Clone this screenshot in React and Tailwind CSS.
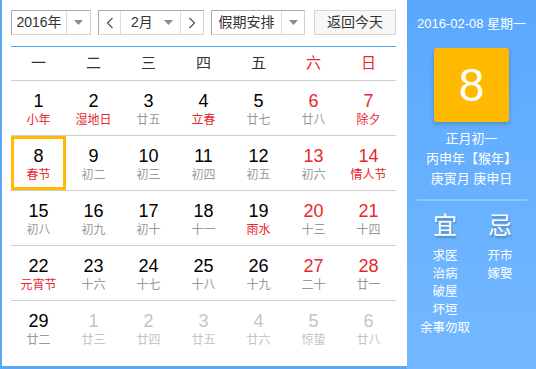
const weekdays = [
  { t: '一' }, { t: '二' }, { t: '三' }, { t: '四' }, { t: '五' }, { t: '六', red: true }, { t: '日', red: true },
];

// n: number, l: lunar, nr: red number, lr: red lunar, o: other month, s: selected
const rows = [
  [
    { n: 1, l: '小年', lr: true },
    { n: 2, l: '湿地日', lr: true },
    { n: 3, l: '廿五' },
    { n: 4, l: '立春', lr: true },
    { n: 5, l: '廿七' },
    { n: 6, l: '廿八', nr: true },
    { n: 7, l: '除夕', nr: true, lr: true },
  ],
  [
    { n: 8, l: '春节', lr: true, s: true },
    { n: 9, l: '初二' },
    { n: 10, l: '初三' },
    { n: 11, l: '初四' },
    { n: 12, l: '初五' },
    { n: 13, l: '初六', nr: true },
    { n: 14, l: '情人节', nr: true, lr: true },
  ],
  [
    { n: 15, l: '初八' },
    { n: 16, l: '初九' },
    { n: 17, l: '初十' },
    { n: 18, l: '十一' },
    { n: 19, l: '雨水', lr: true },
    { n: 20, l: '十三', nr: true },
    { n: 21, l: '十四', nr: true },
  ],
  [
    { n: 22, l: '元宵节', lr: true },
    { n: 23, l: '十六' },
    { n: 24, l: '十七' },
    { n: 25, l: '十八' },
    { n: 26, l: '十九' },
    { n: 27, l: '二十', nr: true },
    { n: 28, l: '廿一', nr: true },
  ],
  [
    { n: 29, l: '廿二' },
    { n: 1, l: '廿三', o: true },
    { n: 2, l: '廿四', o: true },
    { n: 3, l: '廿五', o: true },
    { n: 4, l: '廿六', o: true },
    { n: 5, l: '惊蛰', o: true },
    { n: 6, l: '廿八', o: true },
  ],
];

function Caret() {
  return (
    <svg width="9" height="5" viewBox="0 0 9 5">
      <path d="M0 0h9L4.5 5z" fill="#8a8a8a" />
    </svg>
  );
}

function Chevron({ right }) {
  return (
    <svg width="8" height="12" viewBox="0 0 8 12">
      <path
        d={right ? 'M1.5 1l5 5-5 5' : 'M6.5 1l-5 5 5 5'}
        fill="none"
        stroke="#555"
        strokeWidth="1.2"
      />
    </svg>
  );
}

const boxCls =
  'flex h-[25px] items-stretch border border-t-[#a9a9a9] border-l-[#a9a9a9] border-r-[#d4d4d4] border-b-[#d4d4d4] bg-white text-[14px] text-[#333]';

function Cell({ d }) {
  const numCls = d.o ? 'text-[#c4c4c4]' : d.nr ? 'text-[#e8262c]' : 'text-black';
  const lunCls = d.o ? 'text-[#c4c4c4]' : d.lr ? 'text-[#e8262c]' : 'text-[#999]';
  return (
    <div
      className={
        d.s
          ? 'flex flex-col items-center border-[3px] border-[#ffb900] pt-[7px]'
          : 'flex flex-col items-center pt-[10px]'
      }
    >
      <span className={`text-[18px] leading-[20px] ${numCls}`}>{d.n}</span>
      <span className={`mt-[1px] text-[12px] leading-[17px] ${lunCls}`}>{d.l}</span>
    </div>
  );
}

export default function App() {
  return (
    <div className="flex h-[369px] w-[536px] bg-white font-['Liberation_Sans','Noto_Sans_CJK_SC',sans-serif]">
      <div className="h-[369px] w-[407px] border-b-[3px] border-l-2 border-[#5aa8f6] pl-[9px] pr-[11px] pt-[10px]">
        {/* toolbar */}
        <div className="flex h-[25px]">
          <div className={`${boxCls} w-[80px]`}>
            <span className="flex w-[55px] items-center justify-center border-r border-[#dcdcdc]">2016年</span>
            <span className="flex flex-1 items-center justify-center">
              <Caret />
            </span>
          </div>
          <div className={`${boxCls} ml-[7px] w-[106px]`}>
            <span className="flex w-[22px] items-center justify-center border-r border-[#dcdcdc]">
              <Chevron />
            </span>
            <span className="flex w-[60px] items-center border-r border-[#dcdcdc] pl-[10px]">
              <span>2月</span>
              <span className="ml-auto mr-[7px] flex">
                <Caret />
              </span>
            </span>
            <span className="flex flex-1 items-center justify-center">
              <Chevron right />
            </span>
          </div>
          <div className={`${boxCls} ml-[7px] w-[94px]`}>
            <span className="flex w-[70px] items-center justify-center border-r border-[#dcdcdc]">假期安排</span>
            <span className="flex flex-1 items-center justify-center">
              <Caret />
            </span>
          </div>
          <div className="ml-[9px] flex h-[25px] w-[82px] items-center justify-center border border-[#d4d4d4] bg-[#f7f7f7] text-[14px] text-[#333]">
            返回今天
          </div>
        </div>

        {/* grid */}
        <div className="mt-[11px] border-t border-[#4ea6f5]">
          <div className="grid h-[34px] grid-cols-7 border-b border-[#cfcfcf]">
            {weekdays.map((w) => (
              <div
                key={w.t}
                className={`flex items-center justify-center text-[15px] ${w.red ? 'text-[#e8262c]' : 'text-[#333]'}`}
              >
                {w.t}
              </div>
            ))}
          </div>
          {rows.map((r, i) => (
            <div
              key={i}
              className={`grid h-[55px] grid-cols-7 ${i < rows.length - 1 ? 'border-b border-[#cfcfcf]' : ''}`}
            >
              {r.map((d, j) => (
                <Cell key={j} d={d} />
              ))}
            </div>
          ))}
        </div>
      </div>

      {/* side panel */}
      <div className="flex h-[369px] w-[129px] flex-col items-center bg-gradient-to-b from-[#59a8fe] to-[#74b9ff] text-white">
        <div className="mt-[16px] text-[13px] leading-[16px]">2016-02-08 星期一</div>
        <div className="mt-[16px] flex h-[74px] w-[75px] items-center justify-center rounded-[3px] bg-[#ffb900] text-[46px] leading-none shadow-[0_2px_4px_rgba(0,0,0,0.2)]">
          8
        </div>
        <div className="mt-[7px] flex flex-col items-center text-[13px] leading-[20px]">
          <span>正月初一</span>
          <span>丙申年【猴年】</span>
          <span>庚寅月 庚申日</span>
        </div>
        <div className="mt-[10px] h-[2px] w-[110px] bg-[#8cc5ff]" />
        <div className="mt-[10px] grid w-full grid-cols-[76px_34px]">
          <div className="flex flex-col items-center">
            <span className="text-[24px] leading-[30px] [text-shadow:1px_2px_2px_rgba(0,0,0,0.25)]">宜</span>
            <div className="mt-[6px] flex flex-col items-center text-[12.5px] leading-[18px]">
              <span>求医</span>
              <span>治病</span>
              <span>破屋</span>
              <span>坏垣</span>
              <span>余事勿取</span>
            </div>
          </div>
          <div className="flex flex-col items-center">
            <span className="text-[24px] leading-[30px] [text-shadow:1px_2px_2px_rgba(0,0,0,0.25)]">忌</span>
            <div className="mt-[6px] flex flex-col items-center text-[12.5px] leading-[18px]">
              <span>开市</span>
              <span>嫁娶</span>
            </div>
          </div>
        </div>
      </div>
    </div>
  );
}
